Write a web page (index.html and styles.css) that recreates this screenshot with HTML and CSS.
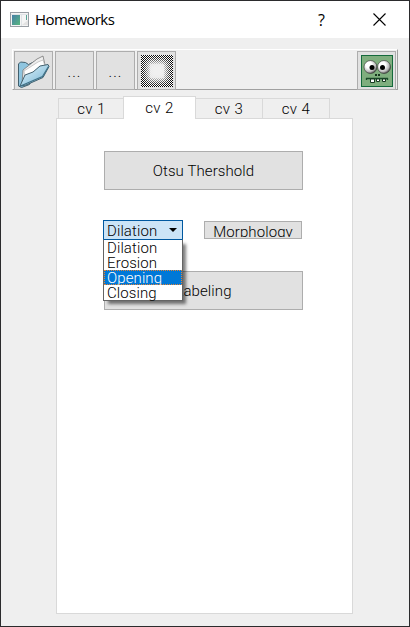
FILE: index.html
```html
<!DOCTYPE html>
<html lang="en">
<head>
<meta charset="utf-8">
<title>Homeworks</title>
<link rel="stylesheet" href="styles.css">
</head>
<body>
<div class="window">
  <header class="titlebar">
    <svg class="app-icon" width="19" height="15" viewBox="0 0 19 15">
      <defs><linearGradient id="app" x1="0" y1="0" x2="1" y2="1"><stop offset="0" stop-color="#477fa7"/><stop offset="1" stop-color="#58b77f"/></linearGradient></defs>
      <rect x=".5" y=".5" width="18" height="14" fill="#f5f5f5" stroke="#9a9fa5"/>
      <rect x="2" y="3" width="8" height="10" fill="url(#app)"/>
      <path d="M1 2.5h17M11.5 3v11" stroke="#dfe3e6"/>
      <path d="M16.5 3v5" stroke="#59a596"/>
      <path d="M12 13h6V8z" fill="#e2e2e2"/>
    </svg>
    <h1 class="title">Homeworks</h1>
    <span class="help">?</span>
    <svg class="close" width="13" height="13" viewBox="0 0 13 13"><path d="M.5.5l12 12M12.5.5l-12 12" stroke="#000" stroke-width="1.1"/></svg>
  </header>
  <div class="toolbar">
    <button class="tool">
      <svg width="33" height="34" viewBox="0 0 33 34">
        <defs><linearGradient id="fold" x1="0" y1="0" x2="1" y2="1"><stop offset="0" stop-color="#e4f5fc"/><stop offset=".55" stop-color="#a5d0e5"/><stop offset="1" stop-color="#6eaccb"/></linearGradient></defs>
        <path d="M1.500 10l2-2 5 .5 3 2 10-5 1 3-10 22-8 3-3-1.500z" fill="#8fc5df" stroke="#42606e"/>
        <path d="M6 16L20 5l6-3 2 9-19 13-4 6z" fill="#eee" stroke="#777" stroke-width=".8"/>
        <path d="M7 17l14-9 5-2 2 6-20 12z" fill="#fff" stroke="#aaa" stroke-width=".6"/>
        <path d="M3 32l5-11 8-3 7-6 8-1.500 1 2-6 11L9 31z" fill="url(#fold)" stroke="#42606e"/>
        <path d="M3.500 32L25.500 22.500l6-10" fill="none" stroke="#3f7187" stroke-width="1.200"/>
      </svg>
    </button>
    <button class="tool dots">...</button>
    <button class="tool dots">...</button>
    <button class="tool">
      <svg width="32" height="32" viewBox="0 0 32 32" shape-rendering="crispEdges">
        <defs>
          <pattern id="check" width="2" height="2" patternUnits="userSpaceOnUse"><rect width="2" height="2" fill="#fff"/><rect width="1" height="1"/><rect x="1" y="1" width="1" height="1"/></pattern>
          <filter id="soft" x="-50%" y="-50%" width="200%" height="200%"><feGaussianBlur stdDeviation="3"/></filter>
        </defs>
        <rect width="32" height="32" fill="url(#check)"/>
        <rect x="6" y="6" width="20" height="20" fill="#f2f2f2" filter="url(#soft)"/>
        <rect x="9" y="9" width="14" height="14" fill="#f0f0f0" opacity=".7"/>
      </svg>
    </button>
    <button class="tool tool-last">
      <svg width="32" height="32" viewBox="0 0 32 32">
        <defs><radialGradient id="eye" cx=".38" cy=".35" r=".68"><stop offset=".35" stop-color="#fff"/><stop offset=".75" stop-color="#bbb"/><stop offset="1" stop-color="#444"/></radialGradient></defs>
        <rect x=".5" y=".5" width="31" height="31" fill="#7fae7e" stroke="#156a3c"/>
        <circle cx="9.500" cy="12" r="6.500" fill="url(#eye)" stroke="#333" stroke-width=".6"/>
        <circle cx="23" cy="12" r="6.500" fill="url(#eye)" stroke="#333" stroke-width=".6"/>
        <circle cx="11" cy="12.500" r="2.500"/><circle cx="21.500" cy="12.500" r="2.500"/>
        <path d="M14 19h2v2h-2zM17 19h2v2h-2z" fill="#17351f"/>
        <path d="M5 23.500h22M5.500 23v2M26.500 23v2" stroke="#1a4b2a" stroke-width="1.300"/>
        <path d="M9.500 24h4v3.500h-4zM15.500 24h3v2.500h-3zM21.500 24h3v2.500h-3z" fill="#fff" stroke="#163820"/>
      </svg>
    </button>
  </div>
  <nav class="tabs">
    <span class="tab t1">cv 1</span>
    <span class="tab active">cv 2</span>
    <span class="tab t3">cv 3</span>
    <span class="tab t4">cv 4</span>
  </nav>
  <main class="pane">
    <button class="big">Otsu Thershold</button>
    <div class="row">
      <div class="combo">
        <span>Dilation</span>
        <svg width="8" height="4" viewBox="0 0 8 4"><path d="M0 0h8L4 4z"/></svg>
        <ul class="menu">
          <li>Dilation</li>
          <li>Erosion</li>
          <li class="selected">Opening</li>
          <li>Closing</li>
        </ul>
      </div>
      <button class="small"><span class="clip">Morphology</span></button>
    </div>
    <button class="big">Labeling</button>
  </main>
</div>
</body>
</html>
```

FILE: styles.css
```css
* { box-sizing: border-box; }
body {
  margin: 0;
  font: 300 15px/15px Roboto, "Liberation Sans", sans-serif;
  letter-spacing: 0.1px;
  color: #000;
}
button {
  font: inherit;
  letter-spacing: inherit;
  color: inherit;
  padding: 0;
  border: 1px solid #adadad;
  background: #e1e1e1;
}
svg { display: block; }
.window {
  width: 410px;
  height: 627px;
  border: 1px solid #2b2b2d;
  background: #efefef;
  overflow: hidden;
}
.titlebar {
  height: 37px;
  display: flex;
  align-items: center;
  background: #fff;
  padding-left: 9px;
}
.title {
  margin: -1px 0 0 6px;
  width: 279px;
  font: 400 15px/20px "Open Sans", sans-serif;
  letter-spacing: -0.55px;
}
.help {
  width: 15px;
  font: 400 16px/20px "Open Sans", sans-serif;
  text-align: center;
}
.close { margin-left: 44px; margin-top: -1px; }
.toolbar {
  width: 386px;
  height: 41px;
  margin: 11px 0 0 11px;
  padding: 1px 0 0 1px;
  display: flex;
  gap: 2px;
  border: 1px solid #fff;
  border-right-color: #a0a0a0;
  border-bottom-color: #a0a0a0;
}
.tool {
  width: 39px;
  height: 39px;
  flex: none;
  display: flex;
  align-items: center;
  justify-content: center;
}
.dots { letter-spacing: 1px; padding-top: 4px; }
.tool-last { margin-left: 179px; }
.tabs {
  display: flex;
  align-items: flex-end;
  height: 23px;
  margin: 6px 0 0 57px;
}
.tab {
  height: 21px;
  border: 1px solid #d9d9d9;
  letter-spacing: 0.4px;
  text-align: center;
  line-height: 20px;
}
.t1 { width: 66px; border-right: 0; }
.active {
  width: 73px;
  height: 23px;
  margin-left: -1px;
  border-bottom: 0;
  background: #fff;
  z-index: 1;
  line-height: 22px;
}
.t3 { width: 67px; border-left: 0; }
.t4 { width: 67px; border-left: 0; }
.pane {
  width: 297px;
  height: 496px;
  margin: -1px 0 0 55px;
  padding: 32px 0 0 47px;
  border: 1px solid #d9d9d9;
  background: #fff;
}
.big {
  display: block;
  width: 199px;
  height: 39px;
  padding-top: 2px;
}
.row {
  display: flex;
  margin: 30px 0 31px -1px;
}
.combo {
  position: relative;
  display: flex;
  align-items: center;
  justify-content: space-between;
  width: 80px;
  height: 20px;
  padding: 2px 5px 0 3px;
  border: 1px solid #0058a0;
  background: #cce4f7;
}
.combo svg { margin-top: -2px; }
.menu {
  position: absolute;
  top: 18px;
  left: -1px;
  width: 80px;
  height: 62px;
  margin: 0;
  padding: 0;
  list-style: none;
  border: 1px solid #646464;
  border-top-color: #0058a0;
  background: #fff;
  box-shadow: 4px 4px 3px -1px rgba(0, 0, 0, 0.5);
}
.menu li { height: 15px; padding-left: 3px; line-height: 16px; }
.menu .selected {
  background: #0078d7;
  color: #fff;
  outline: 1px dotted #e58435;
  outline-offset: -1px;
}
.small {
  width: 98px;
  height: 18px;
  margin: 1px 0 0 21px;
}
.clip {
  display: block;
  height: 14px;
  overflow: hidden;
  line-height: 18px;
}
```
